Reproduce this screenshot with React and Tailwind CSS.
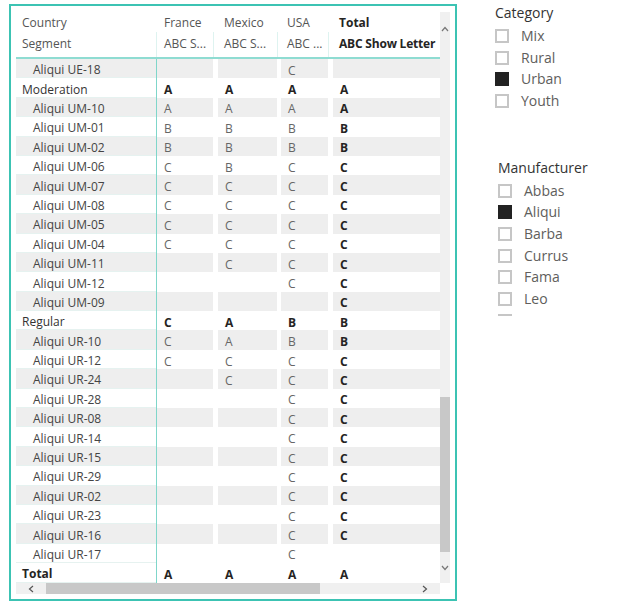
import React from 'react';

const rows = [
  { l: 'Aliqui UE-18', v: ['', '', 'C', ''], c: true },
  { l: 'Moderation', v: ['A', 'A', 'A', 'A'] },
  { l: 'Aliqui UM-10', v: ['A', 'A', 'A', 'A'], c: true },
  { l: 'Aliqui UM-01', v: ['B', 'B', 'B', 'B'], c: true },
  { l: 'Aliqui UM-02', v: ['B', 'B', 'B', 'B'], c: true },
  { l: 'Aliqui UM-06', v: ['C', 'B', 'C', 'C'], c: true },
  { l: 'Aliqui UM-07', v: ['C', 'C', 'C', 'C'], c: true },
  { l: 'Aliqui UM-08', v: ['C', 'C', 'C', 'C'], c: true },
  { l: 'Aliqui UM-05', v: ['C', 'C', 'C', 'C'], c: true },
  { l: 'Aliqui UM-04', v: ['C', 'C', 'C', 'C'], c: true },
  { l: 'Aliqui UM-11', v: ['', 'C', 'C', 'C'], c: true },
  { l: 'Aliqui UM-12', v: ['', '', 'C', 'C'], c: true },
  { l: 'Aliqui UM-09', v: ['', '', '', 'C'], c: true },
  { l: 'Regular', v: ['C', 'A', 'B', 'B'] },
  { l: 'Aliqui UR-10', v: ['C', 'A', 'B', 'B'], c: true },
  { l: 'Aliqui UR-12', v: ['C', 'C', 'C', 'C'], c: true },
  { l: 'Aliqui UR-24', v: ['', 'C', 'C', 'C'], c: true },
  { l: 'Aliqui UR-28', v: ['', '', 'C', 'C'], c: true },
  { l: 'Aliqui UR-08', v: ['', '', 'C', 'C'], c: true },
  { l: 'Aliqui UR-14', v: ['', '', 'C', 'C'], c: true },
  { l: 'Aliqui UR-15', v: ['', '', 'C', 'C'], c: true },
  { l: 'Aliqui UR-29', v: ['', '', 'C', 'C'], c: true },
  { l: 'Aliqui UR-02', v: ['', '', 'C', 'C'], c: true },
  { l: 'Aliqui UR-23', v: ['', '', 'C', 'C'], c: true },
  { l: 'Aliqui UR-16', v: ['', '', 'C', 'C'], c: true },
  { l: 'Aliqui UR-17', v: ['', '', 'C', ''], c: true },
];

const widths = ['w-[56px] mr-[5px]', 'w-[59px] mr-[4px]', 'w-[47px] mr-[5px]', 'w-[107px]'];

function Row({ r, i, total }) {
  const bg = i % 2 === 0 ? 'bg-[#eeeeee]' : 'bg-white';
  const parent = !r.c;
  return (
    <div className="flex h-[19.4px] shrink-0">
      <div className={`w-[140px] ${bg} flex items-center pt-[4px] border-b border-[#e6f2f0] ${r.c ? 'pl-[17px]' : 'pl-[6px]'} ${parent ? (total ? 'font-bold text-[#252423]' : 'text-[#333]') : 'text-[#444]'}`}>
        {r.l}
      </div>
      <div className="w-px bg-[#7fd6ca]" />
      {r.v.map((v, j) => (
        <div
          key={j}
          className={`${widths[j]} ${bg} flex items-center pt-[4px] pl-[7px] ${parent || j === 3 ? 'font-bold text-[#252423]' : 'text-[#666]'}`}
        >
          {v}
        </div>
      ))}
    </div>
  );
}

function Check({ on }) {
  return (
    <span
      className={`inline-block w-[14px] h-[14px] shrink-0 ${on ? 'bg-[#222] border-2 border-[#222]' : 'bg-white border-2 border-[#c6c6c6]'}`}
    />
  );
}

function Slicer({ title, items, checked, clip }) {
  return (
    <div className={`w-[130px] ${clip ? 'h-[158px] overflow-hidden' : ''}`}>
      <div className="text-[14px] text-[#333] leading-[20px] mb-[2px]">{title}</div>
      {items.map((it) => (
        <div key={it} className="flex items-center h-[21.7px] gap-[12px]">
          <Check on={it === checked} />
          <span className="text-[14px] text-[#605e5c] leading-none">{it}</span>
        </div>
      ))}
    </div>
  );
}

export default function App() {
  return (
    <div className="w-[637px] h-[609px] bg-white flex" style={{ fontFamily: '"Open Sans", "Noto Sans", sans-serif' }}>
      <div className="ml-[9px] mt-[4px] w-[448px] h-[597px] border-2 border-[#3cc3b3] pt-[6px] pl-[5px] pr-[5px] flex flex-col text-[12px]">
        <div className="flex h-[571px]">
          <div className="w-[424px] overflow-hidden flex flex-col">
            {/* header */}
            <div className="flex h-[20px] items-center pt-[2px] text-[#555]">
              <div className="w-[141px] pl-[6px]">Country</div>
              <div className="w-[61px] pl-[7px]">France</div>
              <div className="w-[63px] pl-[6px]">Mexico</div>
              <div className="w-[52px] pl-[6px]">USA</div>
              <div className="w-[107px] pl-[6px] font-bold text-[#252423]">Total</div>
            </div>
            <div className="flex h-[25px] text-[#555]">
              <div className="w-[140px] pl-[6px] pt-[3px]">Segment</div>
              <div className="w-px bg-[#def3f0]" />
              <div className="w-[56px] pl-[7px] pt-[3px] whitespace-nowrap">ABC S...</div>
              <div className="w-[5px] border-l border-[#def3f0]" />
              <div className="w-[59px] pl-[6px] pt-[3px] whitespace-nowrap">ABC S...</div>
              <div className="w-[4px] border-l border-[#def3f0]" />
              <div className="w-[47px] pl-[6px] pt-[3px] whitespace-nowrap">ABC ...</div>
              <div className="w-[5px] border-l border-[#def3f0]" />
              <div className="w-[107px] pl-[6px] pt-[3px] font-bold text-[#252423] whitespace-nowrap tracking-[-0.2px]">ABC Show Letter</div>
            </div>
            <div className="h-[2px] bg-[#8fdcd2] shrink-0" />
            {rows.map((r, i) => (
              <Row key={r.l} r={r} i={i} />
            ))}
            <Row r={{ l: 'Total', v: ['A', 'A', 'A', 'A'] }} i={1} total />
          </div>
          {/* vertical scrollbar */}
          <div className="w-[10px] bg-[#f0f0f0] flex flex-col">
            <div className="h-[28px] flex items-center justify-center pt-[6px]">
              <svg width="8" height="6" viewBox="0 0 8 6"><path d="M1 5 L4 1.5 L7 5" fill="none" stroke="#777" strokeWidth="1.2" /></svg>
            </div>
            <div className="flex-1" />
            <div className="h-[155px] bg-[#c8c8c8]" />
            <div className="h-[31px] flex items-center justify-center">
              <svg width="8" height="6" viewBox="0 0 8 6"><path d="M1 1 L4 4.5 L7 1" fill="none" stroke="#777" strokeWidth="1.2" /></svg>
            </div>
          </div>
        </div>
        {/* horizontal scrollbar */}
        <div className="w-[424px] h-[11px] bg-[#f0f0f0] flex items-center">
          <div className="w-[30px] flex items-center justify-center">
            <svg width="6" height="8" viewBox="0 0 6 8"><path d="M5 1 L1.5 4 L5 7" fill="none" stroke="#555" strokeWidth="1.2" /></svg>
          </div>
          <div className="w-[274px] h-full bg-[#c8c8c8]" />
          <div className="flex-1 flex justify-end pr-[12px]">
            <svg width="6" height="8" viewBox="0 0 6 8"><path d="M1 1 L4.5 4 L1 7" fill="none" stroke="#555" strokeWidth="1.2" /></svg>
          </div>
        </div>
      </div>
      <div className="flex flex-col">
        <div className="ml-[38px] mt-[3px]">
          <Slicer title="Category" items={['Mix', 'Rural', 'Urban', 'Youth']} checked="Urban" />
        </div>
        <div className="ml-[41px] mt-[46px]">
          <Slicer title="Manufacturer" items={['Abbas', 'Aliqui', 'Barba', 'Currus', 'Fama', 'Leo', 'Natura']} checked="Aliqui" clip />
        </div>
      </div>
    </div>
  );
}
